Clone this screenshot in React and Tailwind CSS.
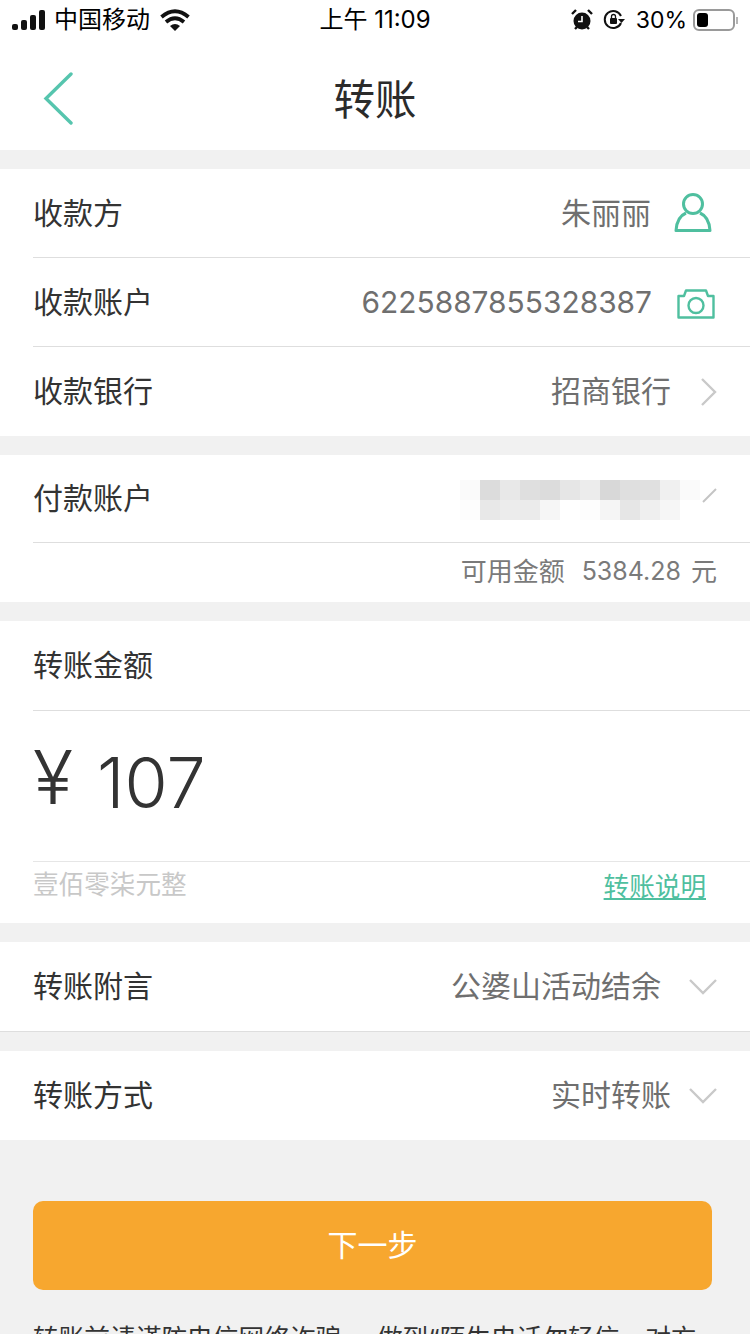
const cjk = "font-['Inter','Noto_Sans_CJK_SC','Liberation_Sans',sans-serif]";

// pixel blocks covering the paying account number
const mosaic = [
  ['#fafafa', '#dcdcdc', '#e8e8e8', '#dfdfdf', '#dcdcdc', '#e6e6e6', '#ececec', '#d8d8d8', '#dfdfdf', '#e0e0e0', '#f0f0f0', '#fafafa'],
  ['#fdfdfd', '#e8e8e8', '#ececec', '#ebebeb', '#f6f6f6', '#ffffff', '#fdfdfd', '#f5f5f5', '#e6e6e6', '#efefef', '#f6f6f6', '#ffffff'],
];

function Chevron({ dir, gap = 'ml-[27px]' }) {
  if (dir === 'down') {
    return (
      <svg width="30" height="20" viewBox="0 0 30 20" className={`${gap} mr-[32px]`}>
        <path d="M2 3 L15 16 L28 3" fill="none" stroke="#c9c9c9" strokeWidth="2.4" />
      </svg>
    );
  }
  return (
    <svg width="20" height="30" viewBox="0 0 20 30" className="ml-[28px] mr-[31px]">
      <path d="M3 2 L16 15 L3 28" fill="none" stroke="#c9c9c9" strokeWidth="2.4" />
    </svg>
  );
}

function Row({ label, h = 'h-[89px]', border = true, children }) {
  return (
    <div className={`ml-[33px] flex items-center justify-between ${h} ${border ? 'border-b border-[#dedede]' : ''}`}>
      <span className="text-[30px] text-[#333333]">{label}</span>
      <div className="flex items-center">{children}</div>
    </div>
  );
}

function Value({ children }) {
  return <span className="text-[30px] text-[#6f6f6f]">{children}</span>;
}

export default function App() {
  return (
    <div className={`h-[1334px] w-[750px] overflow-hidden bg-[#f1f1f1] ${cjk}`}>
      {/* status bar */}
      <div className="flex h-[40px] items-center justify-between bg-white pl-[12px] pr-[12px] text-[24px] text-black">
        <div className="flex w-[250px] items-center">
          <svg width="34" height="20" viewBox="0 0 34 20">
            <rect x="0" y="14" width="6" height="6" rx="2" fill="#111" />
            <rect x="9" y="10" width="6" height="10" rx="2" fill="#111" />
            <rect x="18" y="5" width="6" height="15" rx="2" fill="#111" />
            <rect x="27" y="0" width="6" height="20" rx="2" fill="#111" />
          </svg>
          <span className="ml-[8px] leading-none">中国移动</span>
          <svg width="30" height="22" viewBox="0 0 30 22" className="ml-[10px]">
            <path d="M1.5 8 Q15 -3.5 28.5 8" fill="none" stroke="#111" strokeWidth="3.8" />
            <path d="M6 13 Q15 5.5 24 13" fill="none" stroke="#111" strokeWidth="3.8" />
            <path d="M10 17 L15 22 L20 17 Q15 13 10 17 Z" fill="#111" />
          </svg>
        </div>
        <span className="leading-none">上午 11:09</span>
        <div className="flex w-[250px] items-center justify-end">
          <svg width="22" height="22" viewBox="0 0 22 22">
            <circle cx="11" cy="12" r="8.5" fill="#111" />
            <path d="M11 7 V12.5 H7" fill="none" stroke="#fff" strokeWidth="1.6" />
            <path d="M1 5 L5 1 M21 5 L17 1 M4 20 L6 18 M18 20 L16 18" stroke="#111" strokeWidth="2.4" />
          </svg>
          <svg width="22" height="22" viewBox="0 0 22 22" className="ml-[10px]">
            <path d="M18 14 A8.5 8.5 0 1 1 18 7" fill="none" stroke="#111" strokeWidth="2" />
            <path d="M15 10 H22 L18.5 14 Z" fill="#111" />
            <rect x="7" y="9" width="7" height="6" rx="1" fill="#111" />
            <path d="M8.5 9 V7.5 A2 2 0 0 1 12.5 7.5 V9" fill="none" stroke="#111" strokeWidth="1.3" />
          </svg>
          <span className="ml-[11px] text-[23px] leading-none">30%</span>
          <div className="ml-[6px] flex h-[22px] w-[42px] items-center rounded-[6px] border-2 border-[#9a9a9a] p-[2px]">
            <div className="h-full w-[11px] rounded-[3px] bg-black" />
          </div>
          <div className="ml-[1px] h-[7px] w-[2px] bg-[#b5b5b5]" />
        </div>
      </div>

      {/* nav */}
      <div className="relative flex h-[110px] items-center justify-center bg-white">
        <svg width="32" height="54" viewBox="0 0 32 54" className="absolute left-[43px] top-[32px]">
          <path d="M28 2 L3 26.5 L28 51" fill="none" stroke="#56c5ae" strokeWidth="3.4" strokeLinecap="round" />
        </svg>
        <span className="mt-[12px] text-[41.5px] leading-none text-[#2b2b2b]">转账</span>
      </div>

      <div className="mt-[19px] bg-white">
        <Row label="收款方">
          <Value>朱丽丽</Value>
          <svg width="40" height="40" viewBox="0 0 40 40" className="ml-[22px] mr-[37px]">
            <circle cx="20" cy="11" r="9.5" fill="none" stroke="#4fbf9f" strokeWidth="3" />
            <path d="M13 20 C6 23 3.5 30 3 37.5 H37 C36.5 30 34 23 27 20" fill="none" stroke="#4fbf9f" strokeWidth="3" strokeLinejoin="round" />
          </svg>
        </Row>
        <Row label="收款账户">
          <span className="text-[29.9px] text-[#6f6f6f]">6225887855328387</span>
          <svg width="38" height="30" viewBox="0 0 38 30" className="ml-[25px] mr-[35px] mt-[4px]">
            <path d="M1.5 7 H7 L9 1.5 H29 L31 7 H36.5 V28.5 H1.5 Z" fill="none" stroke="#4fbf9f" strokeWidth="2.4" strokeLinejoin="round" />
            <circle cx="19" cy="16.5" r="7.5" fill="none" stroke="#4fbf9f" strokeWidth="2.4" />
          </svg>
        </Row>
        <Row label="收款银行" border={false}>
          <Value>招商银行</Value>
          <Chevron />
        </Row>
      </div>

      <div className="mt-[19px] bg-white">
        <Row label="付款账户" h="h-[88px]">
          <div className="mt-[2px] flex flex-col">
            {mosaic.map((line, i) => (
              <div key={i} className="flex">
                {line.map((c, j) => (
                  <div key={j} className="h-[20px] w-[20px]" style={{ background: c }} />
                ))}
              </div>
            ))}
          </div>
          <svg width="20" height="20" viewBox="0 0 20 20" className="mb-[6px] ml-[1px] mr-[29px]">
            <path d="M2 16 L15 3" stroke="#c4c4c4" strokeWidth="2" />
          </svg>
        </Row>
        <div className="flex h-[59px] items-center justify-end pb-[2px] pr-[33px] text-[26px] text-[#7a7a7a]">
          <span>可用金额</span>
          <span className="ml-[17px] text-[25px]">5384.28</span>
          <span className="ml-[10px]">元</span>
        </div>
      </div>

      <div className="mt-[19px] bg-white">
        <Row label="转账金额" h="h-[90px]">
          <span />
        </Row>
        <div className="ml-[33px] flex h-[151px] items-center border-b border-[#e6e6e6] text-[#333333]">
          <span className="mb-[18px] text-[74px] font-light leading-none">¥</span>
          <span className="mb-[6px] ml-[24px] text-[70px] font-light leading-none">107</span>
        </div>
        <div className="flex h-[61px] items-center justify-between pb-[14px] pl-[33px] pr-[44px] text-[25.6px]">
          <span className="text-[#c8c8c8]">壹佰零柒元整</span>
          <span className="mt-[3px] text-[#4fbf9f] underline underline-offset-2">转账说明</span>
        </div>
      </div>

      <div className="mt-[19px] border-b border-[#dedede] bg-white">
        <Row label="转账附言" border={false}>
          <Value>公婆山活动结余</Value>
          <Chevron dir="down" />
        </Row>
      </div>

      <div className="mt-[19px] bg-white">
        <Row label="转账方式" border={false}>
          <Value>实时转账</Value>
          <Chevron dir="down" gap="ml-[17px]" />
        </Row>
      </div>

      <button className="ml-[33px] mt-[61px] flex h-[89px] w-[679px] items-center justify-center rounded-[10px] bg-[#f7a72f] text-[30px] text-white">
        下一步
      </button>

      <p className="ml-[33px] mt-[29px] whitespace-nowrap text-[25.7px] leading-[40px] text-[#333333]">
        转账前请谨防电信网络诈骗，<span className="ml-[10px]">做到“陌生电话勿轻信，对方</span>
      </p>
    </div>
  );
}
